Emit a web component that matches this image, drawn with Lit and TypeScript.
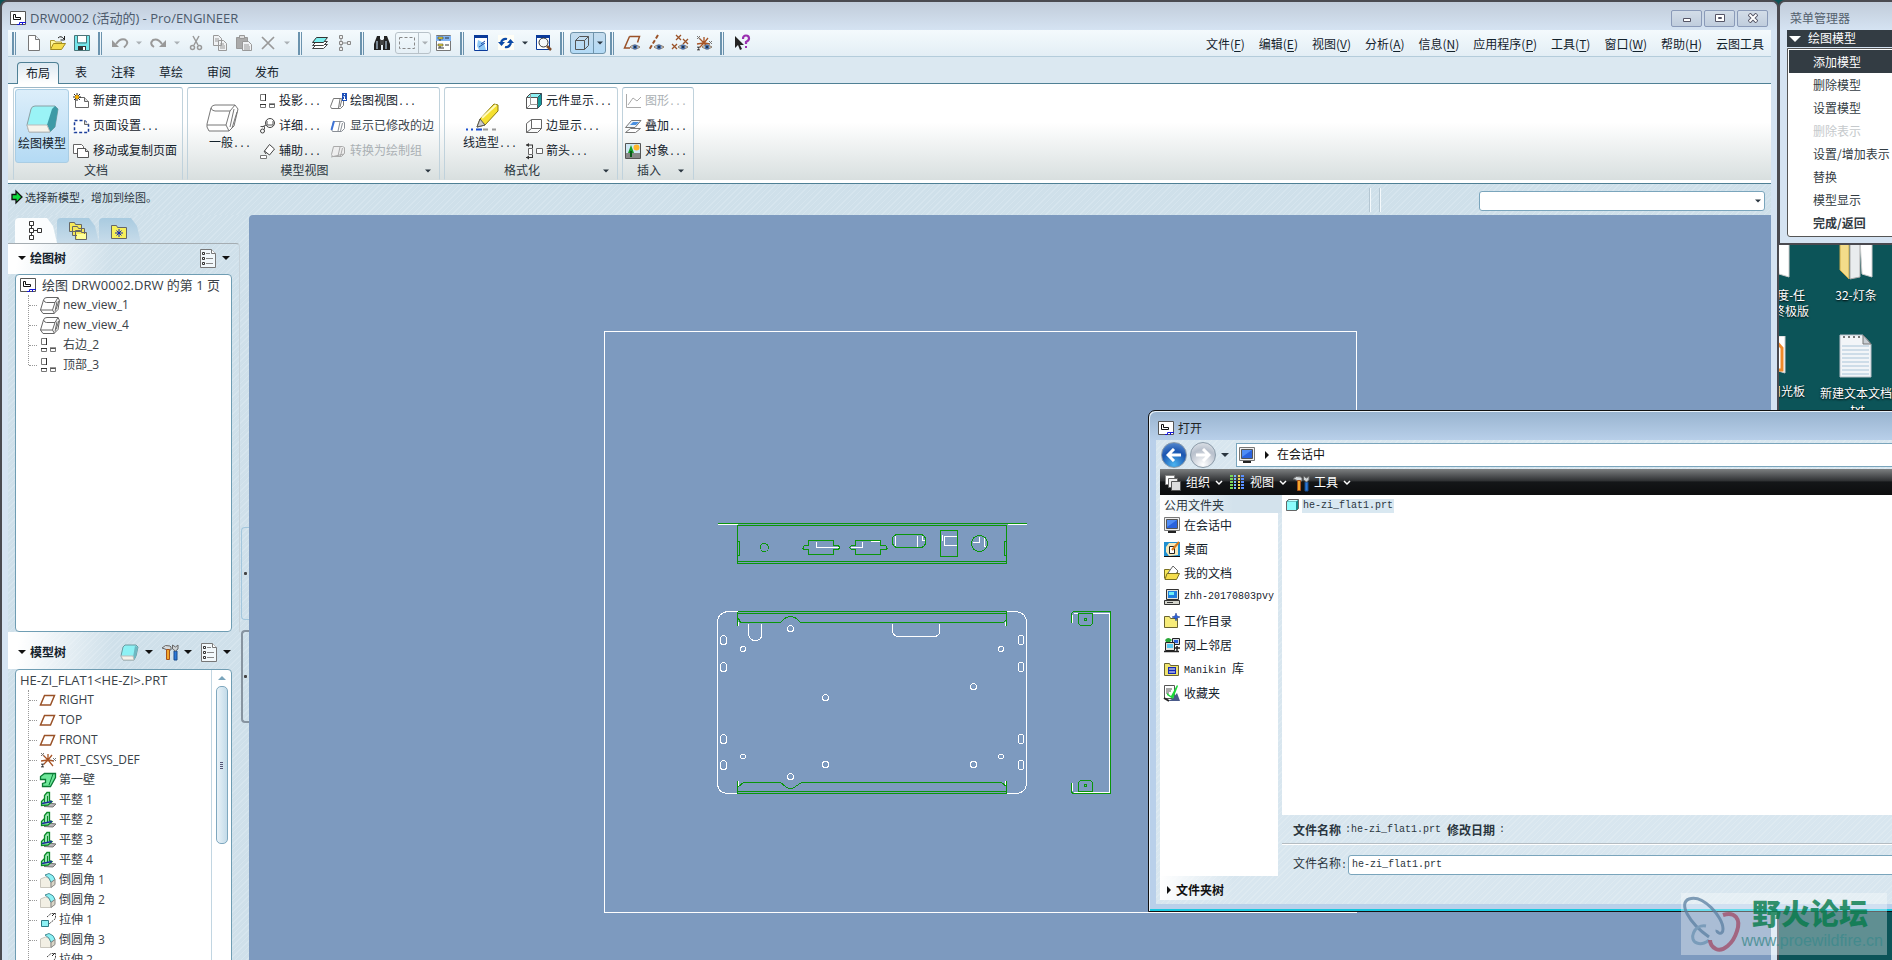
import { LitElement, html, css, svg, nothing } from "lit";
import { customElement } from "lit/decorators.js";

const projection = svg`<path d="M1.500 1.500h5v6h-5zM1.500 11.500h5v3h-5zM10.500 11.500h5v3h-5z" fill="#fff" stroke="#777"/><path d="M6.500 1v7M1 11.500h6M10 11h6" stroke="#333"/>`;
const eye = svg`<path d="M6 12q4-4 10 0q-5 4-10 0z" fill="#e8e4da" stroke="#8a7a68"/><circle cx="11" cy="12" r="2.500" fill="#4a6fa8"/><circle cx="11" cy="12" r="1" fill="#123"/>`;
const page = svg`<path d="M2.500.5h7l4 4v11h-11z" fill="#fff" stroke="#777"/><path d="M9.500.5v4h4" fill="#e8eef4" stroke="#777"/>`;
const csys = svg`<path d="M8 8V2M8 8l6 1M8 8l-5 5M8 8L3 3M8 8l5 6M8 8L1 9M8 8l4-5" stroke="#a85426" stroke-width="1.300"/><path d="M1 1l3 3M4 1L1 4M1 12h3l-3 3h3M13 6l3 3M16 6l-3 3" stroke="#777"/>`;

const icons: Record<string, unknown> = {
  app: svg`<path d="M.5.5h15v13H.5z" fill="#fff" stroke="#555"/><path d="M3.500 3.500h2v3h5v2h-7z" fill="#fff" stroke="#111"/><path d="M7 13.500h2.500v-2H16M12.500 11v3" fill="none" stroke="#1616d8"/>`,
  doc: page,
  open: svg`<path d="M.5 13.500v-8h4l1 1.500h6v3" fill="#fdf6a0" stroke="#b09b30"/><path d="M.5 14.500l3-6h12l-4 6z" fill="#f5dd4c" stroke="#a08a20"/><path d="M8 3q3-3 6 1M14.500 1v4h-4" fill="none" stroke="#222"/>`,
  save: svg`<path d="M.5.5h15v15H.5z" fill="#74e6ea" stroke="#4a7478"/><path d="M4 1h8v6H4z" fill="#fff"/><path d="M3.500 1v7h9V1" fill="none" stroke="#4a7478"/><path d="M4 11h8v4H4z" fill="#333"/><path d="M9 12h2v3H9z" fill="#fff"/>`,
  undo: svg`<path d="M4 9Q8 3 13 4.500q5 3-1 8" fill="none" stroke="#999" stroke-width="2"/><path d="M0 5v7h7z" fill="#999"/>`,
  redo: svg`<path d="M12 9Q8 3 3 5q-4 4 1 7" fill="none" stroke="#999" stroke-width="2"/><path d="M16 5v7H9z" fill="#999"/>`,
  cut: svg`<path d="M5 1l5 9M11 1L6 10" stroke="#999" stroke-width="1.500"/><circle cx="4.500" cy="12.500" r="2" fill="none" stroke="#999" stroke-width="1.500"/><circle cx="11.500" cy="12.500" r="2" fill="none" stroke="#999" stroke-width="1.500"/>`,
  copy: svg`<path d="M1.500.5h5l3 3v7h-8zM6.500 5.500h5l3 3v7h-8z" fill="#f0f2f4" stroke="#999"/><path d="M3 4h4M3 6h4M8 9h4M8 11h5M8 13h5" stroke="#999"/>`,
  paste: svg`<path d="M.5 2.500h11v11H.5z" fill="#aaa" stroke="#999"/><path d="M3.500.5h5v3h-5z" fill="#ddd" stroke="#999"/><path d="M6.500 6.500h6l3 3v6h-9z" fill="#f0f2f4" stroke="#999"/><path d="M8 10h5M8 12h6M8 14h6" stroke="#999"/>`,
  del: svg`<path d="M2 2l12 12M14 2L2 14" stroke="#999" stroke-width="1.700"/>`,
  layers: svg`<path d="M.5 13.500l4-4h11l-4 4z" fill="#fff" stroke="#444"/><path d="M.5 10.500l4-4h11l-4 4z" fill="#fff" stroke="#444"/><path d="M.5 7.500l4-5h11l-4 5z" fill="#7df0f0" stroke="#333"/>`,
  struct: svg`<path d="M3.500.5h3v3h-3zM3.500 6.500h3v3h-3zM3.500 12.500h3v3h-3zM11.500 6.500h3v3h-3z" fill="#eee" stroke="#888"/><path d="M5 4v2M5 10v2M7 8h4" stroke="#888"/>`,
  find: svg`<path d="M3 1h3v3l1 1v10H0V9z" fill="#222"/><path d="M13 1h-3v3L9 5v10h7V9z" fill="#222"/><path d="M6 5h4v5H6z" fill="#444"/><path d="M3 6v8M12 6v8" stroke="#9ab" stroke-width="1.500"/>`,
  marquee: svg`<path d="M.5 2.500h15v11H.5z" fill="none" stroke="#888" stroke-dasharray="3 2"/>`,
  filter: svg`<path d="M.5.5h14v15H.5z" fill="#fff" stroke="#777"/><path d="M0 1h15v5H0z" fill="#7fb2f2"/><path d="M2 2h5v2H2zM2 9h5v2H2z" fill="#f0dc3c" stroke="#443" stroke-width=".6"/><path d="M4 4v2M4 11v2M9 3h4M9 10h4M2 13h6" stroke="#333"/>`,
  repaint: svg`<path d="M.5.5h13v15H.5z" fill="#fff" stroke="#0a3a9a"/><path d="M0 1.500h14" stroke="#0a3a9a" stroke-width="3"/><path d="M4 5l6 3 2 7H5l-2-4z" fill="#8ec8f5"/><path d="M7 9l4-3M5 12l6-4" stroke="#1d4ea8"/>`,
  refresh: svg`<path d="M0 0h16v15H0z" fill="#fffef6"/><path d="M3 7q2-4 6-3M13 8q-2 5-6 4" fill="none" stroke="#0b4aa8" stroke-width="2.200"/><path d="M0 7h7l-3.500 4zM9 8h7l-3.500-4z" fill="#0b4aa8"/>`,
  zoom: svg`<path d="M.5.5h13v14H.5z" fill="#fff" stroke="#0a3a9a"/><path d="M0 1.500h14" stroke="#0a3a9a" stroke-width="3"/><circle cx="7.500" cy="7.500" r="4.500" fill="#f4f8fa" stroke="#333"/><path d="M11 11l4 4" stroke="#7a4a28" stroke-width="2.500"/>`,
  cube: svg`<path d="M1.500 5.500h9v9h-9zM1.500 5.500l4-4h9v9l-4 4M10.500 5.500l4-4" fill="none" stroke="#555"/>`,
  planeEye: svg`<path d="M5.500 1.500h10l-2 6M5.500 1.500L.5 13H6" fill="none" stroke="#9a5228" stroke-width="1.500"/>${eye}`,
  axisEye: svg`<path d="M10 0L1 15" stroke="#9a5228" stroke-width="2" stroke-dasharray="4 2"/>${eye}`,
  pointEye: svg`<path d="M4 0l5 5M9 0L4 5M11 4l5 5M16 4l-5 5M0 9l5 5M5 9l-5 5" stroke="#9a5228" stroke-width="1.300"/>${eye}`,
  csysEye: svg`${csys}${eye}`,
  help: svg`<path d="M1 1v12l3-3 2 5 2-1-2-4h4z" fill="#222"/><path d="M9 4q0-3.500 3-3.500t3 3q0 2-3 3.500v2" fill="none" stroke="#9a2fb0" stroke-width="2.200"/><path d="M11 11h2v2h-2z" fill="#9a2fb0"/>`,
  newPage: svg`<path d="M2.500 4.500h9l4 4v6h-13z" fill="#fff" stroke="#666"/><path d="M11.500 4.500v4h4" fill="#ddd" stroke="#666"/><path d="M4 0v8M0 4h8M1 1l6 6M7 1L1 7" stroke="#222"/><circle cx="4" cy="4" r="2" fill="#ffb400"/>`,
  pageSetup: svg`<path d="M1.500 2.500h10l4 4v8h-14z" fill="#fff" stroke="#1a3d9a" stroke-width="1.500" stroke-dasharray="3 2"/><path d="M11.500 2.500v4h4" fill="#ddd" stroke="#666"/>`,
  movePage: svg`<path d="M.5 1.500h8l2 2v7H.5z" fill="#fff" stroke="#666"/><path d="M4.500 5.500h8l3 3v6h-11z" fill="#fff" stroke="#555"/><path d="M12.500 5.500v3h3" fill="#ddd" stroke="#555"/>`,
  projection,
  detail: svg`<circle cx="11" cy="5" r="4.500" fill="#fff" stroke="#444"/><path d="M8 3v4h6V3M1.500 8.500h4v3M7 7l-4 2" fill="none" stroke="#555"/><circle cx="3.500" cy="13" r="2" fill="none" stroke="#444"/>`,
  auxiliary: svg`<path d="M5.500 8l5-6.500 5 4.500-5 6z" fill="#fff" stroke="#444"/><path d="M1.500 12.500h6v3h-6z" fill="#fff" stroke="#777"/><path d="M5 8l2 3" stroke="#444"/>`,
  viewProps: svg`<path d="M3.500 5.500h8l2 1v6l-3 3h-9l-1-2z" fill="#fff" stroke="#777"/><path d="M10 6l-1.500 9M12 6l-2 8" stroke="#777"/><path d="M12 0h5v8h-5z" fill="#1c4fb8"/><path d="M14.500 1v1M13.500 3.500h1v3M13 6.500h3" stroke="#fff" fill="none"/>`,
  modified: svg`<path d="M3.500 3.500h9l2 1v6l-3 3h-9l-1-2z" fill="#fff" stroke="#8a8f96"/><path d="M4 3l-2.500 9" stroke="#3d74d8" stroke-width="2"/><path d="M10 4l-2 9M12.500 5l-2 8" stroke="#8a8f96"/>`,
  convert: svg`<path d="M3.500 3.500h9l2 1v6l-3 3h-9l-1-2z" fill="#eee" stroke="#aaa"/><path d="M10 4l-2 9M12.500 5l-2 8M1 14l13-3" stroke="#aaa"/>`,
  component: svg`<path d="M5 .5h10l-4 4H1z" fill="#8df1f4"/><path d="M11.500 4.500l4-4v11l-4 4z" fill="#159a9a" stroke="#356"/><path d="M4.500.5h11M4.500.5l-4 4" fill="none" stroke="#444"/><path d="M.5 4.500h11v11H.5z" fill="#fff" stroke="#555"/><path d="M4.500 1v10.500h7M4.500 11.500l-4 4" fill="none" stroke="#999"/>`,
  edges: svg`<path d="M5.500 1.500h10v9l-4 4H.5v-9zM.5 14.500l5-4h10M5.500 1.500v9" fill="none" stroke="#666"/>`,
  arrows: svg`<path d="M2.500 5.500h4v6h-4zM10.500 5.500h6v5h-6z" fill="#fff" stroke="#666"/><path d="M0 2h7M0 14.500h7M6.500 2v3M6.500 12v2" stroke="#333"/><path d="M3 0v4L0 2zM3 12.500v4l-3-2z" fill="#333"/>`,
  graph: svg`<path d="M1.500 1v13.500H16M3 12l5-7 4 3 4-4" fill="none" stroke="#aaa"/>`,
  overlay: svg`<path d="M.5 14.500l5-4h10l-5 4z" fill="#fff" stroke="#777"/><path d="M.5 9.500l6-7H16l-6 7z" fill="#eef4f8" stroke="#777"/><path d="M5 7l3-3h6l-3 3z" fill="#4a90e0"/>`,
  object: svg`<path d="M.5.5h15v15H.5z" fill="#cfe8f5" stroke="#555"/><path d="M1 10h14v5H1z" fill="#888"/><circle cx="11.500" cy="4.500" r="3" fill="#ffb52a"/><path d="M6 2l3 8H3z" fill="#18a028"/><path d="M5 8h2v6H5z" fill="#0b5a18"/>`,
  list: svg`<path d="M.5.5h11l4 4v14H.5z" fill="#f2f8fb" stroke="#777"/><path d="M11.500.5v4h4" fill="#fff" stroke="#777"/><path d="M2.500 3.500h2v2h-2zM2.500 8.500h2v2h-2zM2.500 13.500h2v2h-2z" fill="#fff" stroke="#333"/><path d="M6 4.500h4M6 9.500h7M6 14.500h7" stroke="#888"/>`,
  box3d: svg`<path d="M3.500 3Q4 .5 7 .5h11l1.500 3-1.500 9-4 4H3L.5 13z" fill="#fff" stroke="#666"/><path d="M3.500 3q1 2.500 3 2.500h8.500L18 .5M.5 13h12l2 3.500M15 5.500l-2.500 7.500M17 4.500l-2 10M19 3.500l-3 9" fill="none" stroke="#666"/>`,
  projTree: projection,
  plane: svg`<path d="M4.500 3.500h10l-4 9.500H.5z" fill="none" stroke="#9a5228" stroke-width="1.500"/>`,
  csys,
  flange: svg`<path d="M4 14.500l9 .5 3-3-8-1z" fill="#b5b5b5" stroke="#777"/><path d="M1.500 13.500v-4l3-3V3.500L7 .5h2.500v8l2.500 1-4 3.500z" fill="#9be8b4" stroke="#0a8a28" stroke-width="1.300"/><path d="M4.500 6.500v4M7.500 4v6" stroke="#0a8a28"/><path d="M2 11.500l10-2" stroke="#1a2d9a" stroke-width="1.300"/>`,
  round: svg`<path d="M.5 7l5-2q5 1 5.500 6v4.500H.5z" fill="#f2efe4" stroke="#c9c6bd"/><path d="M5 3l4-1.500q5 1.500 6 6l-4 3q-1-5-6-7.500z" fill="#8df1f4" stroke="#4a8f98"/><path d="M11 10.500l4-3v5l-4 3z" fill="#d9d5c6" stroke="#888"/>`,
  extrude: svg`<path d="M7 5l4-3.500h4.500v5L9 12" fill="#fff" stroke="#444" stroke-dasharray="2 1"/><path d="M1.500 8.500h7v6h-7z" fill="#8df1f4" stroke="#2c7c86"/><path d="M12 4l3-3" stroke="#222"/>`,
  monitor: svg`<path d="M.5.5h15v13H.5z" fill="#eee" stroke="#777"/><path d="M2.500 2.500h11v9h-11z" fill="#2a62dd" stroke="#555"/><path d="M3 3h10L3 10z" fill="#4f8cf5"/><path d="M4 15h8" stroke="#222" stroke-width="2"/>`,
  hammer: svg`<path d="M0 4q3-4 8-2l1 1v3H5L3 5z" fill="#d5dadd" stroke="#666"/><path d="M4.500 5.500h3v10h-3z" fill="#f3a62a" stroke="#a5521a"/><path d="M12 7h3v9h-3z" fill="#2b78d8" stroke="#174a8c"/><path d="M10.500 1v4l3 2 2.500-2V1l-2.500 2z" fill="#cfd4d6" stroke="#666"/>`,
  wall: svg`<path d="M4.500 1.500h11v4l-5 9h-8v-3l3-1v-3h-5v-3z" fill="#6ee89a" stroke="#0a7a35" stroke-width="1.300"/><path d="M13 2l-4 11" stroke="#0a7a35"/>`,
  treeTab: svg`<path d="M2.500.5h4v4h-4zM2.500 7.500h4v4h-4zM2.500 14.500h4v4h-4zM10.500 7.500h4v4h-4z" fill="#fff" stroke="#333"/><path d="M4.500 5v2M4.500 12v2M7 9.500h3" stroke="#333"/>`,
  folders: svg`<path d="M.5.5h5l1 2h6v7H.5zM3.500 4.500h5l1 2h6v7h-12zM6.500 8.500h5l1 2h5v7h-11z" fill="#f7e95a" stroke="#666"/><path d="M8 12h9v5H8z" fill="#ffff9a"/>`,
  favFolder: svg`<path d="M.5 15.500v-13h5l1 2h9v11z" fill="#f7f05a" stroke="#666"/><path d="M8 6v8M4 10h8M5.500 7.500l5 5M10.500 7.500l-5 5" stroke="#1428b4"/>`,
  model: svg`<path d="M1 12L3 3l2-2h11l2 2-2 9-2 4H3z" fill="#8df1f4" stroke="#6a9aa0"/><path d="M15 2l3 1-2 9-2 4-1-3z" fill="#6fb8c2"/><path d="M1 12h12l1 4H3z" fill="#f4f2ea" stroke="#bbb"/>`,
  organize: svg`<path d="M.5.5h9v9h-9z" fill="#fff" stroke="#888"/><path d="M3.500 3.500h9v9h-9z" fill="#eee" stroke="#666"/><path d="M6.500 6.500h9v9h-9z" fill="#ddd" stroke="#555"/>`,
  views: svg`<path d="M1 1h3M1 4h3M1 7h3M1 10h3M1 13h3" stroke="#78d858" stroke-width="2"/><path d="M5 1h2M5 4h2M5 7h2M5 10h2M5 13h2" stroke="#7ab8ff" stroke-width="2"/><path d="M9 1h2M9 4h2M9 7h2M9 10h2M9 13h2" stroke="#f0d858" stroke-width="2"/><path d="M12 1h3M12 4h3M12 7h3M12 10h3M12 13h3" stroke="#5a90ff" stroke-width="2"/>`,
  desktop: svg`<path d="M0 1h16v14H0z" fill="#1f8fd0"/><path d="M2 6l3-4h9v12l-9 1-3-4z" fill="#f6e8b8"/><path d="M5.500 5.500h5v7h-5z" fill="#fff" stroke="#222"/><path d="M8 9l7-8" stroke="#d87a1a" stroke-width="2"/><path d="M0 15.500h16" stroke="#111"/>`,
  mydocs: svg`<path d="M.5 13.500v-9h5l1 1.500h7v3" fill="#f7e95a" stroke="#7a7020"/><path d="M4 8l5-7 5 5-3 4z" fill="#fff" stroke="#666"/><path d="M1 14.500l2-6h12.500l-3 6z" fill="#f5dd4c" stroke="#7a7020"/>`,
  computer: svg`<path d="M2.500.5h12v10h-12z" fill="#e4e4dc" stroke="#333"/><path d="M4 2h9v7H4z" fill="#1f7fe0"/><path d="M5 3h5v3H5z" fill="#6cf0f8"/><path d="M.5 11.500h15v4H.5z" fill="#d4d4cc" stroke="#333"/><path d="M3 13.500h6" stroke="#333"/>`,
  workdir: svg`<path d="M.5 14.500v-11h5l1 2h7v9z" fill="#f7ec7a" stroke="#6a6430"/><path d="M12 0l1 3 3 1-3 1-1 3-1-3-3-1 3-1z" fill="#2a62dd" stroke="#12308a" stroke-width=".5"/>`,
  network: svg`<path d="M8.500 1.500h7v6h-7z" fill="#cfd8e8" stroke="#222"/><path d="M10 3h4v3h-4z" fill="#2a62dd"/><path d="M1.500 5.500h9v8h-9z" fill="#e4e4dc" stroke="#222"/><path d="M3 7h6v4H3z" fill="#58c8f4"/><path d="M1 3q3-4 7 0l-2 2H2z" fill="#2aa838"/><path d="M0 14.500h15M13 9v5M11 11h5" stroke="#222" stroke-width="1.500"/>`,
  library: svg`<path d="M.5 14.500v-12h5l1 2h8v10z" fill="#f0e470" stroke="#6a6430"/><path d="M4 6h8v7H4z" fill="#1428b4"/><path d="M5 8h6M5 11h6" stroke="#fff"/>`,
  favorite: svg`<path d="M.5.5h10v13H.5z" fill="#fff" stroke="#555"/><path d="M2 4h6M2 6h5M2 8h3" stroke="#555"/><path d="M8 14l5-6 3 8H4z" fill="#4a5a8a"/><path d="M3 8l4 3 6-11 1 1-5 13-6-4z" fill="#1fd83a"/><path d="M0 13l5 3" stroke="#222" stroke-width="2"/>`,
  prt: svg`<path d="M.5 2.500l2-2h10v9l-2 2H.5z" fill="#158a8a" stroke="#666"/><path d="M1 3h9v8H1z" fill="#8cfcfc"/><path d="M1 2.500L3 1h9l-2 1.500z" fill="#c8ffff"/>`,
  go: svg`<path d="M1 4.500h4V1l6 6-6 6V9.500H1z" fill="#0fdc3c" stroke="#111" stroke-width="1.300"/>`,
  caret: svg`<path d="M0 0h8L4 4z" fill="currentColor"/>`,
  caretRight: svg`<path d="M0 0v8l4-4z" fill="currentColor"/>`,
  chevron: svg`<path d="M1 1l3 3 3-3" fill="none" stroke="#fff" stroke-width="1.500"/>`,
  modelBig: svg`<path d="M1 20L5 4q1-3 4-3h20l3 3-3 18-5 5H3z" fill="#9af3f6" stroke="#8aa0a4"/><path d="M26 4l3-3 3 3-3 18-5 5-3-7z" fill="#3d9aa6"/><path d="M1 20h20l3 7H3z" fill="#f6f4ec" stroke="#bbb"/>`,
  generalBig: svg`<path d="M1 20L5 4q1-3 4-3h20l3 4-4 17-5 5H3l-2-4z" fill="#fff" stroke="#777"/><path d="M5 4q1 3 4 3h15l5-6M1 21h19l3 6M24 7l-4 14M28 5l-4 18M31 8l-5 16" fill="none" stroke="#777"/>`,
  pencilBig: svg`<path d="M12 23l3-8L29 0l4 1v6L20 21z" fill="#f5e030" stroke="#8a7a10"/><path d="M17 14l14-13" stroke="#fffab8" stroke-width="2"/><path d="M12 23l3-8 5 6z" fill="#ccc" stroke="#555"/><path d="M1 25.500h2M6 25.500h2M11 25.500h6" stroke="#1a4fd0" stroke-width="2"/><path d="M18 25.500h5M27 25.500h4" stroke="#999" stroke-width="2"/>`,
};

const icon = (name: string, w = 16, h = w) =>
  html`<svg class="icon" width=${w} height=${h} viewBox="0 0 ${w} ${h}" aria-hidden="true">${icons[name]}</svg>`;
const caret = () => icon("caret", 8, 4);
const dots = html`<span class="dots">...</span>`;

type Tool = { i?: string; label?: string; caret?: boolean; off?: boolean; split?: boolean };
const toolGroups: Tool[][] = [
  [{ i: "doc", label: "新建" }, { i: "open", label: "打开" }, { i: "save", label: "保存" }],
  [{ i: "undo", label: "撤销" }, { caret: true, off: true }, { i: "redo", label: "重做" }, { caret: true, off: true },
   { i: "cut", label: "剪切" }, { i: "copy", label: "复制" }, { i: "paste", label: "粘贴" }, { i: "del", label: "删除" }, { caret: true, off: true }],
  [{ i: "layers", label: "层" }, { i: "struct", label: "结构" }],
  [{ i: "find", label: "查找" }, { i: "marquee", label: "选取", split: true, off: true }, { i: "filter", label: "过滤器" }],
  [{ i: "repaint", label: "重画" }, { i: "refresh", label: "更新" }, { caret: true }, { i: "zoom", label: "缩放" }],
  [{ i: "cube", label: "显示样式", split: true }],
  [{ i: "planeEye", label: "平面" }, { i: "axisEye", label: "轴" }, { i: "pointEye", label: "点" }, { i: "csysEye", label: "坐标系" }],
  [{ i: "help", label: "帮助" }],
];
const menus: [string, string?][] = [["文件", "F"], ["编辑", "E"], ["视图", "V"], ["分析", "A"], ["信息", "N"],
  ["应用程序", "P"], ["工具", "T"], ["窗口", "W"], ["帮助", "H"], ["云图工具"]];

type Cmd = { i: string; t: string; more?: boolean; off?: boolean; dim?: boolean };
type Group = { name: string; big?: { i: string; t: string; h: number; w: number; more?: boolean; on?: boolean }; cols: Cmd[][]; menu?: boolean };
const ribbon: Group[] = [
  { name: "文档", big: { i: "modelBig", t: "绘图模型", w: 33, h: 28, on: true },
    cols: [[{ i: "newPage", t: "新建页面" }, { i: "pageSetup", t: "页面设置", more: true }, { i: "movePage", t: "移动或复制页面" }]] },
  { name: "模型视图", menu: true, big: { i: "generalBig", t: "一般", w: 33, h: 28, more: true },
    cols: [
      [{ i: "projection", t: "投影", more: true }, { i: "detail", t: "详细", more: true }, { i: "auxiliary", t: "辅助", more: true }],
      [{ i: "viewProps", t: "绘图视图", more: true }, { i: "modified", t: "显示已修改的边", dim: true }, { i: "convert", t: "转换为绘制组", off: true }],
    ] },
  { name: "格式化", menu: true, big: { i: "pencilBig", t: "线造型", w: 34, h: 28, more: true },
    cols: [[{ i: "component", t: "元件显示", more: true }, { i: "edges", t: "边显示", more: true }, { i: "arrows", t: "箭头", more: true }]] },
  { name: "插入", menu: true,
    cols: [[{ i: "graph", t: "图形", more: true, off: true }, { i: "overlay", t: "叠加", more: true }, { i: "object", t: "对象", more: true }]] },
];
const drawTree: [string, string, number][] = [["box3d", "new_view_1", 20], ["box3d", "new_view_4", 20], ["projTree", "右边_2", 20], ["projTree", "顶部_3", 20]];
const modelTree: [string, string][] = [["plane", "RIGHT"], ["plane", "TOP"], ["plane", "FRONT"], ["csys", "PRT_CSYS_DEF"],
  ["wall", "第一壁"], ["flange", "平整 1"], ["flange", "平整 2"], ["flange", "平整 3"], ["flange", "平整 4"],
  ["round", "倒圆角 1"], ["round", "倒圆角 2"], ["extrude", "拉伸 1"], ["round", "倒圆角 3"], ["extrude", "拉伸 2"]];
const places: [string, string, boolean?][] = [["monitor", "在会话中"], ["desktop", "桌面"], ["mydocs", "我的文档"],
  ["computer", "zhh-20170803pvy", true], ["workdir", "工作目录"], ["network", "网上邻居"], ["library", "Manikin 库"], ["favorite", "收藏夹"]];
const menuManager: { t: string; cls?: string }[] = [{ t: "添加模型", cls: "on" }, { t: "删除模型" }, { t: "设置模型" },
  { t: "删除表示", cls: "off" }, { t: "设置/增加表示" }, { t: "替换" }, { t: "模型显示" }, { t: "完成/返回", cls: "strong" }];

const holes: [number, number, number][] = [[90, 128, 3], [42.5, 148.5, 2.5], [300.5, 148.5, 2.5], [273, 186, 3], [125, 197, 3],
  [42.5, 256, 2.5], [300.5, 256, 2.5], [125, 264, 3], [273, 264, 3], [90, 276, 3]];

@customElement("app-root")
export class AppRoot extends LitElement {
  static styles = css`
    :host { display: block; height: 100vh; font: 12px/16px "Open Sans", "Noto Sans CJK SC", sans-serif; color: #2b3640; }
    * { box-sizing: border-box; }
    button, input, select { font: inherit; color: inherit; margin: 0; }
    button { background: none; border: 0; padding: 0; display: inline-flex; align-items: center; white-space: nowrap; }
    a { color: inherit; text-decoration: none; }
    ul { list-style: none; margin: 0; padding: 0; }
    h2 { margin: 0; font: inherit; font-weight: 700; }
    .icon { display: block; flex: none; overflow: visible; }
    .desktop { position: relative; height: 100%; overflow: hidden; background: #0c5458; }
    .hatch { background: repeating-linear-gradient(135deg, #cfe0ea 0 3px, #d6e5ee 3px 4px); }

    .window { position: absolute; display: flex; flex-direction: column; background: #d5e2f0; border: 1px solid #4a4a50; }
    .main { inset: 0 113px -8px 0; border-width: 2px 2px 0; border-radius: 7px 7px 0 0; padding: 0 6px 0 6px;
      background: linear-gradient(#c1ccda, #d5e3f2 28px); }
    .titlebar { display: flex; align-items: center; gap: 4px; height: 28px; padding: 4px 0 0 2px; font-size: 13px; color: #4c5a6c; }
    .titlebar .winbtns { margin-left: auto; display: flex; gap: 2px; padding: 0 3px 0 0; }
    .winbtns button { width: 31px; height: 17px; justify-content: center; border: 1px solid #8a9ab8; border-radius: 2px; background: linear-gradient(#d3dde8, #c0cddd); }

    .toolbar { display: flex; align-items: center; height: 27px; padding-left: 4px; border-bottom: 1px solid #b4ccdb; background: linear-gradient(#f4fafd, #e3eef5); }
    .tools { display: flex; align-items: center; padding: 0 4px 0 6px; }
    .grip { width: 4px; height: 23px; flex: none; background: radial-gradient(circle at 1px 1px, #6b93ae 1px, transparent 1px) 0 0 / 3px 2px; }
    .tool { width: 24px; height: 22px; justify-content: center; }
    .tool.drop { width: 14px; }
    .tool.drop .icon, .drop .icon { width: 6px; }
    .off { color: #aab0b4; }
    .split { display: flex; width: 36px; height: 22px; margin: 0 1px; border: 1px solid #b8c2c9; border-radius: 3px; }
    .split button { width: 22px; justify-content: center; }
    .split .drop { width: 12px; border-left: 1px solid #b8c2c9; }
    .split.on { margin: 0; border-color: #6f93aa; background: linear-gradient(#c5dced, #b3daf6); }
    .split.on .drop { border-color: #6f93aa; }
    .menubar { display: flex; gap: 14px; margin-left: auto; padding: 2px 7px 0 0; color: #14222c; font-family: "Noto Sans CJK SC", sans-serif; }
    .menubar u { text-underline-offset: 2px; }

    .tabs { display: flex; align-items: flex-end; height: 27px; padding-left: 5px; background: #dbe8f1; border-bottom: 1px solid #4f8095; }
    .tabs button { height: 22px; padding: 2px 12px 0; color: #14222c; }
    .tabs .on { margin: 0 4px -1px; padding: 1px 8px 0; border: 1px solid #4f8095; border-bottom: 0; border-radius: 4px 4px 0 0; background: linear-gradient(#dde9f1, #fff); }
    .ribbon { display: flex; gap: 4px; height: 100px; padding: 3px 5px; border-bottom: 1px solid #4f8095;
      background: linear-gradient(#fff 0 40%, #d8dfdf) 0 0 / 100% 96px no-repeat #fff; color: #14222c; }
    .group { display: flex; flex-direction: column; height: 93px; border: 1px solid #c0d2dc; border-top: 1px solid #9db8c8; border-bottom-color: transparent; border-radius: 3px 3px 0 0; padding: 1px 5px 0 1px; }
    .group.plain { padding: 1px 6px 0 2px; }
    .cmds { display: flex; height: 74px; }
    .big { flex-direction: column; justify-content: flex-end; gap: 4px; width: 54px; padding-bottom: 12px; line-height: 14px; }
    .big.more { width: 70px; padding-right: 4px; }
    .big.more > span { margin-left: 16px; }
    .big.wide { width: 80px; padding-right: 8px; }
    .big.on { border: 1px solid #a9cde4; border-radius: 3px; background: linear-gradient(#dceefa, #b4daf4); padding-bottom: 11px; }
    .col { display: flex; flex-direction: column; padding-left: 3px; }
    .col + .col { padding-left: 9px; }
    .col.first { padding-left: 4px; }
    .plain .col, .more + .col { padding-left: 0; }
    .cmd { height: 25px; gap: 3px; line-height: 16px; }
    .dim { color: #3b464e; }
    .dots { font: 10px/12px "Liberation Mono", monospace; }
    .gname { display: flex; justify-content: center; align-items: center; position: relative; height: 16px; color: #2b3640; }
    .gname.menu { padding-right: 14px; }
    .gname .icon { position: absolute; right: 3px; width: 6px; }

    .message { display: flex; align-items: center; height: 31px; gap: 3px; padding: 0 6px 0 3px; }
    .message output { padding-bottom: 5px; display: flex; gap: 2px; align-items: center; font-family: "Noto Sans CJK SC", sans-serif; font-size: 11px; }
    .bars { width: 11px; height: 24px; margin: 0 96px 0 auto; border: solid #b4c6d2; border-width: 0 1px; box-shadow: 1px 0 #f4f9fc, inset 1px 0 #f4f9fc; }
    .message select { width: 286px; height: 20px; border: 1px solid #7aa5bc; border-radius: 3px; appearance: none; background: #fff; }
    .combo { display: grid; align-items: center; justify-items: end; padding-top: 2px; }
    .combo > * { grid-area: 1 / 1; }
    .combo .icon { width: 6px; margin-right: 4px; pointer-events: none; }

    .work { flex: 1; display: flex; min-height: 0; }
    .side { display: flex; width: 241px; flex: none; margin-top: 0; }
    .panels { display: flex; flex-direction: column; flex: 1; min-width: 0; }
    .sidetabs { display: flex; height: 28px; padding: 3px 0 0 7px; }
    .sidetabs button { width: 42px; padding-left: 12px; background: linear-gradient(#a9cbe0, #c8dcea); border-radius: 4px 0 0 0; clip-path: polygon(0 0, 32px 0, 38px 8px, 100% 100%, 0 100%); }
    .sidetabs button.on { background: #fbfdfe; }
    .panel { display: flex; flex-direction: column; padding: 0 7px; margin-right: 1px; }
    .panel.top { height: 389px; border-top: 1px solid #a5adb2; border-right: 1px solid #c6d2da; border-radius: 0 4px 0 0; }
    .panel.bottom { flex: 1; min-height: 0; padding-right: 8px; }
    .phead { display: flex; align-items: center; gap: 9px; height: 30px; flex: none; margin: 0 -7px; padding: 0 9px 2px 10px; color: #14222c; background: linear-gradient(100deg, #fff 5%, transparent 45%); }
    .bottom .phead { height: 37px; margin-right: -8px; padding: 3px 9px 0 10px; }
    .phead h2 { display: flex; align-items: center; gap: 4px; margin-right: auto; font-family: "Noto Sans CJK SC", sans-serif; }
    .phead button { gap: 5px; }
    .phead .icon:last-child { color: #111; }
    .tree { flex: 1; display: flex; min-height: 0; background: #fff; border: 1px solid #6f9db3; border-radius: 4px 4px 0 0; overflow: hidden; color: #3a4248; }
    .top .tree { border-radius: 4px; }
    .nodes { flex: 1; }
    .root { display: flex; align-items: center; gap: 6px; height: 20px; padding-left: 4px; white-space: nowrap; font-size: 13px; }
    .kids { display: flex; flex-direction: column; margin-left: 12px; border-left: 1px dotted #999; }
    .kids li { display: flex; align-items: center; height: 20px; gap: 3px; }
    .kids li::before { content: ""; width: 8px; border-top: 1px dotted #999; }
    .kids li:last-child { margin-bottom: -10px; }
    .scroll { width: 20px; display: flex; flex-direction: column; align-items: center; gap: 6px; padding: 6px 0 0 0; border-left: 1px solid #c2d6e2; color: #7aa5bc; }
    .scroll .icon { transform: rotate(180deg); }
    .thumb { width: 12px; height: 158px; border: 1px solid #7fa8bf; border-radius: 5px; background: linear-gradient(90deg, #e8f2f8, #c3dbe9); display: grid; place-items: center; }
    .thumb::after { content: ""; width: 3px; height: 7px; background: repeating-linear-gradient(#557 0 1px, transparent 1px 2px); }
    .handles { width: 8px; display: flex; flex-direction: column; gap: 10px; padding-top: 312px; }
    .handle { height: 93px; border: 1px solid #a3c7dd; border-right: 0; border-radius: 4px 0 0 4px; justify-content: center; }
    .handle.down { border-color: #8794a0; border-width: 2px 0 2px 2px; }
    .handle::after { content: ""; width: 3px; height: 3px; margin-right: 1px; border-radius: 1px; background: #444; }
    .canvas { flex: 1; min-width: 0; background: #7d9abf; border-top-left-radius: 4px; overflow: hidden; }
    .canvas svg { display: block; width: 100%; height: 100%; }

    .manager { top: 0; right: -60px; width: 174px; height: 245px; border-width: 2px; border-radius: 7px 7px 0 0; padding: 0 6px 6px 7px; color: #55616e; background: linear-gradient(#c1ccda, #d5e3f2 28px); }
    .manager header { height: 28px; padding: 8px 0 0 3px; font-family: "Noto Sans CJK SC", sans-serif; }
    .manager h2 { display: flex; align-items: center; gap: 7px; height: 17px; padding-left: 2px; background: #333c43; color: #fff; font-weight: 400; }
    .manager h2 .icon { width: 12px; height: 6px; }
    .manager ul { margin-top: 1px; flex: 1; background: #fff; border: 1px solid #555; padding: 1px 0 0 1px; font-family: "Noto Sans CJK SC", sans-serif; border-radius: 0 0 0 3px; }
    .manager button { display: flex; width: 100%; height: 23px; padding-left: 24px; color: #333c43; }
    .manager .on { background: #333c43; color: #fff; }
    .manager .off { color: #c5c9cc; }
    .manager .strong { font-weight: 700; }

    .shortcut { position: absolute; display: flex; flex-direction: column; align-items: center; width: 76px; gap: 7px; color: #fff; text-align: center; white-space: nowrap; text-shadow: 0 1px 2px #000; font: 12px/16px "Noto Sans CJK SC", sans-serif; }
    .shortcut.left { align-items: flex-start; }
    .shortcut.left span { align-self: center; }
    .s1 { right: -2px; top: 240px; }
    .s2 { right: -2px; top: 334px; }
    .s3 { right: 63px; top: 240px; }
    .s4 { right: 67px; top: 336px; }

    .dialog { left: calc(100% - 744px); right: -20px; top: 410px; height: 502px; border-color: #111; border-radius: 7px 0 0 0; box-shadow: inset 1px 1px #e8f2fa, inset 0 -2px #18c8e0; padding: 0 0 7px 7px; background: linear-gradient(#98b3cf, #b9d0ea 30px); }
    .dialog .titlebar { height: 29px; flex: none; color: #222; font: 12px/16px "Noto Sans CJK SC", sans-serif; }
    .dbody { flex: 1; display: flex; flex-direction: column; min-height: 0; padding: 0 0 4px 4px; background: repeating-linear-gradient(135deg, #d8e6ef 0 3px, #deeaf1 3px 4px); }
    .address { display: flex; align-items: center; height: 29px; padding-left: 1px; }
    .nav { width: 26px; height: 26px; margin-right: 3px; border-radius: 50%; justify-content: center; border: 1px solid #8a9aa8; background: radial-gradient(circle at 50% 90%, #4ab4f0, #1a55b0 55%, #6a9ad8); }
    .nav.fwd { background: radial-gradient(circle at 50% 90%, #fff, #b8c0cc 60%, #e8ecf0); }
    .address > button:nth-child(3) { padding-left: 2px; }
    .crumbs { flex: 1; display: flex; align-items: center; gap: 10px; height: 24px; margin-left: 7px; padding-left: 2px; background: #fff; border: 1px solid #7aa5bc; border-right: 0; color: #111; }
    .crumbs a { margin-left: -2px; }
    .dark { display: flex; align-items: center; height: 26px; flex: none; padding-left: 5px; gap: 6px; color: #fff; background: linear-gradient(#7c7f80, #303234 45%, #141618 50%, #0c0d0e); }
    .dark button { gap: 5px; padding-top: 1px; }
    .dsplit { flex: 1; display: flex; min-height: 0; }
    .places { width: 122px; flex: none; display: flex; flex-direction: column; font-family: "Noto Sans CJK SC", sans-serif; }
    .places h2 { height: 18px; padding-left: 4px; font-weight: 400; line-height: 20px; background: linear-gradient(90deg, #fff, #d3e2ec 60%); }
    .places ul { flex: 1; background: #fff; margin-right: 4px; padding-left: 4px; color: #14222c; }
    .places li { height: 24px; }
    .places li a { display: flex; align-items: center; gap: 4px; height: 24px; white-space: nowrap; }
    .mono { font-family: "Liberation Mono", "Noto Sans CJK SC", monospace; font-size: 10px; }
    .folders { height: 24px; gap: 5px; padding: 4px 0 0 7px; font-weight: 700; color: #111; background: linear-gradient(90deg, #fff, transparent 60%); }
    .folders .icon { width: 4px; }
    .files { flex: 1; display: flex; flex-direction: column; min-width: 0; font-family: "Noto Sans CJK SC", sans-serif; }
    .filelist { flex: 1; background: #fff; padding: 3px 4px; }
    .file { display: inline-flex; gap: 3px; }
    .file .mono { background: #d9e8f1; line-height: 14px; padding: 0 1px; }
    .info { height: 29px; display: flex; align-items: center; padding: 1px 0 0 11px; border-bottom: 1px solid #b4bcc2; box-shadow: 0 1px #fff; }
    .info b { font-weight: 700; }
    .info .mono { margin-left: 4px; }
    .info .mono + b { margin-left: 6px; }
    .field { display: flex; align-items: center; height: 56px; padding: 0 0 15px 11px; gap: 1px; }
    .field input { flex: 1; height: 20px; padding: 0 3px; border: 1px solid #7aa5bc; border-radius: 3px; background: #fff; font: 10px "Liberation Mono", monospace; }

    .mark { position: absolute; right: 5px; bottom: 5px; width: 206px; height: 62px; background: rgb(255 255 255 / 35%); display: flex; align-items: flex-start; }
    .mark svg { position: absolute; left: 0; top: 0; }
    .marktext { margin-left: auto; display: flex; flex-direction: column; text-align: right; padding-right: 4px; white-space: nowrap; }
    .marktext strong { font: 900 29px/38px "Noto Sans CJK SC", sans-serif; color: #067a4a; opacity: .8; padding-right: 15px; }
    .marktext span { font: 16px/20px "Liberation Sans", sans-serif; color: #3d8a8c; opacity: .8; }
  `;

  private tool(t: Tool) {
    if (t.split) return html`<span class="split ${t.off ? "off" : "on"}"><button aria-label=${t.label!}>${icon(t.i!)}</button><button class="drop" aria-label="更多">${caret()}</button></span>`;
    if (t.caret) return html`<button class="tool drop ${t.off ? "off" : ""}" aria-label="更多">${caret()}</button>`;
    return html`<button class="tool" aria-label=${t.label!}>${icon(t.i!)}</button>`;
  }

  private group(g: Group) {
    const b = g.big;
    return html`<section class="group ${b ? "" : "plain"}">
      <div class="cmds">
        ${b ? html`<button class="big ${b.on ? "on" : "more"} ${b.i === "pencilBig" ? "wide" : ""}">${icon(b.i, b.w, b.h)}<span>${b.t}${b.more ? dots : nothing}</span></button>` : nothing}
        ${g.cols.map((c, n) => html`<div class="col ${b?.on && n === 0 ? "first" : ""}">
          ${c.map((x) => html`<button class="cmd ${x.off ? "off" : x.dim ? "dim" : ""}">${icon(x.i, 17, 16)}<span>${x.t}${x.more ? dots : nothing}</span></button>`)}
        </div>`)}
      </div>
      <div class="gname ${g.menu ? "menu" : ""}">${g.name}${g.menu ? caret() : nothing}</div>
    </section>`;
  }

  private drawing() {
    return html`<svg shape-rendering="crispEdges" fill="none" role="img" aria-label="图纸">
      <rect x="355.500" y="116.500" width="752" height="581" stroke="#fff"/>
      <g transform="translate(451.500 285.500)" stroke="#fff">
        <path d="M17 24H37M307 24H326M116 41V47H138M150 47H162V41M170 41H180M195 35V46M217 35V46M222 35V40H225M257 36H244V45H257M241 35h1v5M272 42H279V36M284 36V46H286"/>
        <path d="M37 111H28Q17 112 17 122V284Q18 292 26 293H37M306 111H315Q326 112 326 122V284Q325 292 316 293H306"/>
        <path d="M48 123V134Q49 140 55 140Q61 140 61 134V123M192 123V131Q193 136 198 136H233Q239 136 239 131V123M38 121V125M305 121V125M38 280V285M305 280V285"/>
        ${holes.map(([x, y, r]) => svg`<circle cx=${x} cy=${y} r=${r}/>`)}
        ${[135, 162, 234, 260].map((y) => svg`<rect x="20" y=${y} width="6" height="9" rx="3"/><rect x="318" y=${y} width="5" height="9" rx="2"/>`)}
        <path d="M409 113V292M372 122V114M373 113H409M372 282V290M373 292H409"/>
        <g stroke="#0a960a">
          <path d="M17 23H326M37 25H306V63H37ZM37 61H306M37 41H39V55H37M306 41H304V55H306"/>
          <circle cx="64" cy="47" r="4"/>
          <path d="M102 48L104 45H108V40H133V45H138L139 47L138 49H133V54H108V49H104ZM149 47L151 45H155V40H180V45H185L187 48L185 49H180V54H155V49H151Z"/>
          <rect x="192" y="34" width="33" height="13" rx="5"/><rect x="240" y="30" width="17" height="26"/><circle cx="279" cy="43" r="8"/>
          <path d="M37 111H306M37 113H306M37 111V125M306 111V125M38 118L40 122H80Q85 116 90 116Q95 116 100 122H303L306 119"/>
          <path d="M37 293H306M37 291H306M37 293V280M306 293V280M38 286L43 282H80L85 286Q90 290 95 286L101 282H301L306 286"/>
          <path d="M371 122V113L373 111H410V293H373L371 292V282"/>
          <path d="M378 113H392V123L390 125H380L378 123ZM378 291V282L380 280H390L392 282V291Z"/>
          <circle cx="385" cy="119" r="1"/><circle cx="385" cy="285" r="1"/>
        </g>
      </g>
    </svg>`;
  }

  render() {
    return html`<div class="desktop">
      <div class="shortcut left s3">${this.folder()}<span>度-任<br>终极版</span></div>
      <div class="shortcut s1">${this.folder()}<span>32-灯条</span></div>
      <div class="shortcut left s4">${this.folder(true)}<span>用光板</span></div>
      <div class="shortcut s2">
        <svg width="34" height="44" viewBox="0 0 34 44"><path d="M1 1h23l8 9v33H1z" fill="#f2f5f8" stroke="#b8c0c8"/><path d="M24 1v9h8z" fill="#c8ced4" stroke="#777"/><path d="M3 12h27M3 16h27M3 20h27M3 24h27M3 28h27M3 32h27M3 36h27M3 40h27" stroke="#a9c4d8"/><path d="M4 3h18" stroke="#777" stroke-dasharray="2 3" stroke-width="2"/></svg>
        <span>新建文本文档<br>.txt</span></div>

      <div class="window main">
        <header class="titlebar">${icon("app", 16, 14)}<span>DRW0002 (活动的) - Pro/ENGINEER</span>
          <span class="winbtns">
            <button aria-label="最小化"><svg width="10" height="10"><path d="M1.500 5.500h7v3h-7z" fill="#fff" stroke="#556"/></svg></button>
            <button aria-label="最大化"><svg width="10" height="10"><path d="M.5 1.500h9v7h-9zM3.500 4.500h3v1h-3z" fill="#fff" stroke="#556"/></svg></button>
            <button aria-label="关闭"><svg width="10" height="10"><path d="M1 1l8 8M9 1L1 9" stroke="#556" stroke-width="4"/><path d="M1.500 1.500l7 7M8.500 1.500l-7 7" stroke="#fff" stroke-width="2"/></svg></button>
          </span>
        </header>
        <div class="toolbar">
          ${toolGroups.map((g) => html`<span class="grip"></span><div class="tools">${g.map((t) => this.tool(t))}</div>`)}
          <nav class="menubar">${menus.map(([t, k]) => html`<a href="#">${t}${k ? html`(<u>${k}</u>)` : nothing}</a>`)}</nav>
        </div>
        <nav class="tabs">${["布局", "表", "注释", "草绘", "审阅", "发布"].map((t, n) => html`<button class=${n ? "" : "on"}>${t}</button>`)}</nav>
        <div class="ribbon">${ribbon.map((g) => this.group(g))}</div>
        <div class="message hatch">
          <output>${icon("go", 12, 14)}选择新模型，增加到绘图。</output>
          <span class="bars"></span>
          <span class="combo"><select aria-label="过滤器"><option></option></select>${caret()}</span>
        </div>
        <div class="work hatch">
          <aside class="side">
            <div class="panels">
              <div class="sidetabs">
                <button class="on" aria-label="树">${icon("treeTab", 18, 19)}</button>
                <button aria-label="文件夹">${icon("folders", 18)}</button>
                <button aria-label="收藏夹">${icon("favFolder", 17, 16)}</button>
              </div>
              <section class="panel top">
                <div class="phead"><h2>${icon("caret", 8, 4)}绘图树</h2><button aria-label="设置">${icon("list", 17, 19)}${caret()}</button></div>
                <div class="tree"><div class="nodes">
                  <div class="root">${icon("app", 16, 14)}绘图 DRW0002.DRW 的第 1 页</div>
                  <ul class="kids">${drawTree.map(([i, t, w]) => html`<li>${icon(i, w, 17)}${t}</li>`)}</ul>
                </div></div>
              </section>
              <section class="panel bottom">
                <div class="phead"><h2>${icon("caret", 8, 4)}模型树</h2>
                  <button aria-label="显示">${icon("model", 20, 17)}${caret()}</button>
                  <button aria-label="工具">${icon("hammer", 17, 17)}${caret()}</button>
                  <button aria-label="设置">${icon("list", 17, 19)}${caret()}</button></div>
                <div class="tree"><div class="nodes">
                  <div class="root">HE-ZI_FLAT1&lt;HE-ZI&gt;.PRT</div>
                  <ul class="kids">${modelTree.map(([i, t]) => html`<li>${icon(i)}${t}</li>`)}</ul>
                </div><div class="scroll">${caret()}<div class="thumb"></div></div></div>
              </section>
            </div>
            <div class="handles"><button class="handle" aria-label="折叠"></button><button class="handle down" aria-label="展开"></button></div>
          </aside>
          <main class="canvas">${this.drawing()}</main>
        </div>
      </div>

      <div class="window manager">
        <header>菜单管理器</header>
        <h2>${icon("caret", 8, 4)}绘图模型</h2>
        <ul>${menuManager.map((m) => html`<li><button class=${m.cls ?? ""}>${m.t}</button></li>`)}</ul>
      </div>

      <div class="window dialog" role="dialog" aria-label="打开">
        <header class="titlebar">${icon("app", 16, 14)}<span>打开</span></header>
        <div class="dbody">
          <div class="address">
            <button class="nav" aria-label="后退"><svg width="16" height="14"><path d="M8 1L2 7l6 6M2 7h13" fill="none" stroke="#fff" stroke-width="3"/></svg></button>
            <button class="nav fwd" aria-label="前进"><svg width="16" height="14"><path d="M8 1l6 6-6 6M14 7H1" fill="none" stroke="#fff" stroke-width="3"/></svg></button>
            <button aria-label="历史">${icon("caret", 8, 4)}</button>
            <div class="crumbs">${icon("monitor")}${icon("caretRight", 4, 8)}<a href="#">在会话中</a></div>
          </div>
          <div class="dark">
            <button>${icon("organize")}组织${icon("chevron", 8, 6)}</button>
            <button>${icon("views")}视图${icon("chevron", 8, 6)}</button>
            <button>${icon("hammer")}工具${icon("chevron", 8, 6)}</button>
          </div>
          <div class="dsplit">
            <nav class="places">
              <h2>公用文件夹</h2>
              <ul>${places.map(([i, t, m]) => html`<li><a href="#">${icon(i)}<span class=${m ? "mono" : ""}>${t.startsWith("Manikin") ? html`<span class="mono">Manikin </span>库` : t}</span></a></li>`)}</ul>
              <button class="folders">${icon("caretRight", 4, 8)}文件夹树</button>
            </nav>
            <section class="files">
              <div class="filelist"><a class="file" href="#">${icon("prt", 13, 12)}<span class="mono">he-zi_flat1.prt</span></a></div>
              <div class="info"><b>文件名称</b><span class="mono">:he-zi_flat1.prt</span><b>修改日期</b><span class="mono">:</span></div>
              <div class="field"><label for="fname">文件名称<span class="mono">:</span></label><input id="fname" value="he-zi_flat1.prt"></div>
            </section>
          </div>
        </div>
      </div>

      <div class="mark">
        <svg width="70" height="62" viewBox="0 0 70 62" fill="none"><path d="M28 44C8 30-3 10 8 6c14-5 34 18 34 30 0 7-7 4-6 1" stroke="#5a7fa0" stroke-width="3" opacity=".75"/><path d="M25 33c-12-2-18 14-9 17 5 2 10-1 12-3" stroke="#7a9cba" stroke-width="3"/><path d="M42 22c12-4 18 4 14 16-4 13-14 21-21 18-4-2-6-6-6-9" stroke="#a0506c" stroke-width="4" opacity=".8"/></svg>
        <div class="marktext"><strong>野火论坛</strong><span>www.proewildfire.cn</span></div>
      </div>
    </div>`;
  }

  private folder(orange = false) {
    return html`<svg width="40" height="40" viewBox="0 0 40 40"><path d="M4 0h9v39l-9-9z" fill="#f3dc8a" stroke="#c9a94a"/><path d="M14 0h10v37l-10 2z" fill="#e9ecee" stroke="#aaa"/><path d="M24 0h12v37l-10-3z" fill="#fff" stroke="#ccc"/>${orange ? svg`<path d="M24 2l9 10v22H24" fill="#fff" stroke="#f08a2a" stroke-width="3"/>` : nothing}</svg>`;
  }
}
